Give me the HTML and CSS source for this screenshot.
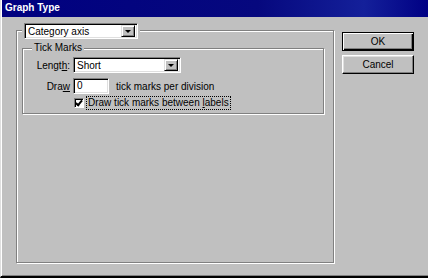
FILE: index.html
```html
<!DOCTYPE html>
<html lang="en">
<head>
  <meta charset="UTF-8" />
  <title>Graph Type</title>
  <link rel="stylesheet" href="styles.css">
</head>
<body>
  <div class="window">
    <div class="title-bar">Graph Type</div>
    <div class="dialog-body">
      <div class="group axis-group">
        <div class="combo axis-combo">
          <span class="combo-text">Category axis</span>
          <span class="combo-arrow"></span>
        </div>
        <div class="group tick-group">
          <div class="group-label">Tick Marks</div>
          <div class="tick-form">
            <label class="field-label">Lengt<u>h</u>:</label>
            <div class="combo length-combo">
              <span class="combo-text">Short</span>
              <span class="combo-arrow"></span>
            </div>
            <label class="field-label">Dra<u>w</u></label>
            <div class="draw-row">
              <div class="text-input">0</div>
              <span>tick marks per division</span>
            </div>
            <div></div>
            <div class="check-row">
              <span class="checkbox"></span>
              <span class="check-label">Draw tick marks between <u>l</u>abels</span>
            </div>
          </div>
        </div>
      </div>
      <div class="buttons">
        <button class="btn btn-default">OK</button>
        <button class="btn">Cancel</button>
      </div>
    </div>
  </div>
</body>
</html>
```

FILE: styles.css
```css
body {
  margin: 0;
  background: #c0c0c0;
  font-family: 'Liberation Sans', Arial, sans-serif;
  font-size: 10px;
  color: #000;
}

.window {
  width: 428px;
  height: 278px;
  box-sizing: border-box;
  border-left: 1px solid #dfdfdf;
  border-bottom: 2px solid #000;
  box-shadow: inset 1px 0 0 #fff, inset 0 -1px 0 #808080;
  display: flex;
  flex-direction: column;
}

.title-bar {
  height: 17px;
  margin-left: 1px;
  padding-left: 3px;
  background: linear-gradient(to right, #000080, #06087e 60%, #14209a 85%, #000084);
  color: #fff;
  font-weight: bold;
  font-size: 10px;
  line-height: 16px;
}

.dialog-body {
  display: flex;
  gap: 8px;
  padding: 13px 0 0 15px;
}

.group {
  position: relative;
  box-sizing: border-box;
  border: 1px solid #808080;
  box-shadow: 1px 1px 0 #fff, inset 1px 1px 0 #fff;
}

.axis-group {
  width: 318px;
  height: 233px;
  padding: 17px 0 0 5px;
}

.tick-group {
  width: 302px;
  height: 66px;
  padding: 8px 0 0 0;
}

.group-label {
  position: absolute;
  top: -8px;
  left: 9px;
  padding: 0 2px;
  background: #c0c0c0;
  line-height: 14px;
}

.combo {
  box-sizing: border-box;
  height: 16px;
  background: #fff;
  border: 1px solid;
  border-color: #808080 #fff #fff #808080;
  box-shadow: inset 1px 1px 0 #000, inset -1px -1px 0 #dfdfdf;
  display: flex;
  align-items: center;
  padding: 0 2px 0 3px;
}

.axis-combo {
  position: absolute;
  top: -8px;
  left: 7px;
  width: 114px;
  outline: 2px solid #c0c0c0;
}

.combo-text {
  flex: 1;
}

.combo-arrow {
  width: 14px;
  height: 12px;
  box-sizing: border-box;
  background: #c0c0c0;
  border: 1px solid;
  border-color: #dfdfdf #000 #000 #dfdfdf;
  box-shadow: inset 1px 1px 0 #fff, inset -1px -1px 0 #808080;
  display: flex;
  align-items: center;
  justify-content: center;
}

.combo-arrow::after {
  content: "";
  border-left: 3px solid transparent;
  border-right: 3px solid transparent;
  border-top: 3px solid #000;
  margin-top: 1px;
}

.tick-form {
  display: grid;
  grid-template-columns: 47px auto;
  column-gap: 3px;
  row-gap: 5px;
  align-items: center;
}

.field-label {
  text-align: right;
}

.length-combo {
  width: 108px;
}

.draw-row {
  display: flex;
  align-items: center;
  gap: 7px;
}

.text-input {
  box-sizing: border-box;
  width: 36px;
  height: 16px;
  background: #fff;
  border: 1px solid;
  border-color: #808080 #fff #fff #808080;
  box-shadow: inset 1px 1px 0 #000, inset -1px -1px 0 #dfdfdf;
  padding-left: 3px;
  line-height: 14px;
}

.check-row {
  display: flex;
  align-items: center;
  gap: 3px;
  margin-top: -2px;
}

.checkbox {
  width: 10px;
  height: 10px;
  box-sizing: border-box;
  margin-left: 1px;
  background: #fff;
  border: 1px solid;
  border-color: #808080 #fff #fff #808080;
  box-shadow: inset 1px 1px 0 #000;
  position: relative;
}

.checkbox::after {
  content: "";
  position: absolute;
  left: 2px;
  top: 0px;
  width: 2px;
  height: 5px;
  border-right: 2px solid #000;
  border-bottom: 2px solid #000;
  transform: rotate(40deg);
}

.check-label {
  padding: 0 1px;
  outline: 1px dotted #000;
  line-height: 12px;
}

.buttons {
  display: flex;
  flex-direction: column;
  gap: 4px;
  padding-top: 2px;
}

.btn {
  width: 72px;
  height: 19px;
  box-sizing: border-box;
  background: #c0c0c0;
  font-family: 'Liberation Sans', Arial, sans-serif;
  font-size: 10px;
  color: #000;
  border: 1px solid;
  border-color: #fff #000 #000 #fff;
  box-shadow: inset -1px -1px 0 #808080, inset 1px 1px 0 #dfdfdf;
  padding: 0;
}

.btn-default {
  border: 1px solid #000;
  box-shadow: inset 1px 1px 0 #fff, inset -1px -1px 0 #000, inset -2px -2px 0 #808080;
}
```
